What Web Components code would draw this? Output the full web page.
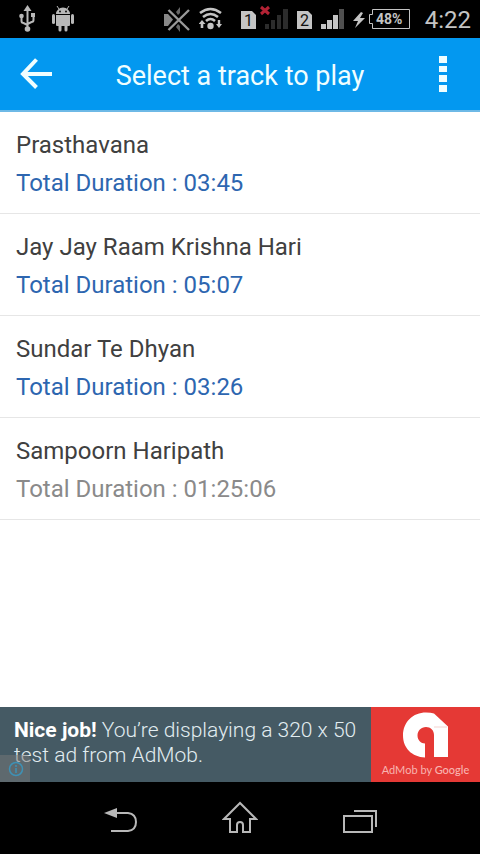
<!DOCTYPE html>
<html lang="en">
<head>
<meta charset="utf-8">
<meta name="viewport" content="width=device-width, initial-scale=1">
<title>Select a track to play</title>
<style>
html, body { margin: 0; padding: 0; }
body { background: #fff; font-family: Roboto, "Noto Sans", sans-serif; }
</style>
</head>
<body>
<track-app></track-app>

<template id="status-bar">
<style>
:host { display: flex; justify-content: space-between; align-items: center; height: 38px; background: #000; color: #c4c4c4; padding: 0 9px 0 16px; box-sizing: border-box; }
.group { display: flex; align-items: center; gap: 8px; }
.left { gap: 14px; }
svg { display: block; }
text { font: 400 16px Roboto, sans-serif; fill: #111; }
.battery text { font: 700 14px Roboto, sans-serif; fill: #c4c4c4; }
.clock { font-size: 24px; line-height: 36px; margin-left: 6px; padding-top: 2px; }
</style>
<div class="group left">
  <svg width="22" height="38" viewBox="16 0 22 38" fill="none" stroke="#b8b8b8" stroke-width="2" aria-label="USB" role="img">
    <path d="M27.500 10V29M21.500 17v4q0 2 2 2l4 2M33.500 17v3q0 2-2 2l-4 2"/>
    <g fill="#b8b8b8" stroke="none"><path d="M27.500 5l4 6h-8z"/><circle cx="27.500" cy="29" r="2.800"/><circle cx="21.500" cy="16" r="2.300"/><path d="M31 13h4v4h-4z"/></g>
  </svg>
  <svg width="22" height="38" viewBox="52 0 22 38" fill="#b8b8b8" aria-label="Debugging" role="img">
    <path d="M56 14a7 6.500 0 0 1 14 0zM56 15h14v10a1 1 0 0 1-1 1H57a1 1 0 0 1-1-1z"/>
    <path d="M58.500 25h3v5a1.500 1.500 0 0 1-3 0zM64.500 25h3v5a1.500 1.500 0 0 1-3 0z"/>
    <rect x="52" y="14" width="3" height="10" rx="1.500"/><rect x="71" y="14" width="3" height="10" rx="1.500"/>
    <path d="M59 9l-2-3M67 9l2-3" stroke="#b8b8b8"/><circle cx="60" cy="11.500" r=".9" fill="#000"/><circle cx="66" cy="11.500" r=".9" fill="#000"/>
  </svg>
</div>
<div class="group">
  <svg width="28" height="38" viewBox="163 0 28 38" aria-label="Silent" role="img">
    <path d="M164 14h4l5 5.500-5 6.500h-4z" fill="#888"/><path d="M176 12l4-5v6l-2 2zM176 27l4 5v-6l-2-2z" fill="#666"/>
    <path d="M168.500 10L189 30M189 10L168.500 30" stroke="#999" stroke-width="2.400"/>
  </svg>
  <svg width="24" height="38" viewBox="199 0 24 38" fill="none" stroke="#c4c4c4" stroke-width="2.600" aria-label="Wi-Fi" role="img">
    <path d="M200 13q10.500-8 21 0M203 17q7.500-6 15 0M206 21q4.500-4 9 0"/>
    <circle cx="210.500" cy="26" r="3.200" fill="#c4c4c4" stroke="none"/>
    <path d="M202 20l3.500 4h-2.200v4h-2.600v-4h-2.200zM219 28l3-4h-1.800v-4h-2.400v4H216z" fill="#c4c4c4" stroke="none"/>
  </svg>
  <svg width="58" height="38" viewBox="231 0 58 38" aria-label="SIM 1, no signal" role="img">
    <path d="M241 11h11l4 4v14h-15z" fill="#c4c4c4"/><text x="244" y="26">1</text>
    <path d="M265 24h4v5h-4zM271 20h4v9h-4zM277 15h4v14h-4zM283 9h5v20h-5z" fill="#2c2c2c"/>
    <path d="M261 7l8 7M269 7l-8 7" stroke="#b32234" stroke-width="3"/>
  </svg>
  <svg width="48" height="38" viewBox="297 0 48 38" aria-label="SIM 2 signal" role="img">
    <path d="M297 11h11l4 4v14h-15z" fill="#c4c4c4"/><text x="300" y="26">2</text>
    <path d="M321 24h5v5h-5zM327 20h5v9h-5zM333 15h5v14h-5z" fill="#c4c4c4"/><path d="M339 9h5v20h-5z" fill="#505050"/>
  </svg>
  <svg class="battery" width="58" height="38" viewBox="353 0 58 38" aria-label="Battery" role="img">
    <path d="M361 12l-8 9h5l-3 7 10-10h-5l3-5z" fill="#c4c4c4"/>
    <path d="M372.500 9.500h37v19h-37v-5h-3v-9h3z" fill="none" stroke="#c4c4c4"/>
    <text x="376" y="24">48%</text>
  </svg>
  <time class="clock">4:22</time>
</div>
</template>

<template id="app-bar">
<style>
:host { display: grid; grid-template-columns: 74px 1fr 74px; align-items: center; height: 74px; box-sizing: border-box; background: #0398f0; border-bottom: 2px solid #6eb9e6; color: #f0feff; }
h1 { margin: 0; font-size: 27px; line-height: 32px; font-weight: 400; text-align: center; padding-top: 4px; white-space: nowrap; }
button { border: 0; padding: 0; margin: 0; background: none; height: 72px; color: inherit; }
svg { display: block; margin: auto; }
</style>
<button type="button" aria-label="Back"><svg width="34" height="34" fill="none" stroke="currentColor" stroke-width="4"><path d="M16.500 2.500L3 17l13.500 13.500M3 17h29"/></svg></button>
<h1><slot></slot></h1>
<button type="button" aria-label="More options"><svg width="8" height="36" fill="currentColor"><path d="M0 0h8v7H0zM0 10h8v6H0zM0 19h8v7H0zM0 29h8v7H0z"/></svg></button>
</template>

<template id="track-item">
<style>
:host { display: block; border-bottom: 1px solid #e6e6e6; padding: 14px 16px 11px; color: #2d66b0; }
:host([muted]) { color: #8a8a8a; }
h2, p { margin: 0; font-weight: 400; font-size: 24px; line-height: 38px; }
h2 { color: #404040; }
</style>
<h2><slot name="title"></slot></h2>
<p>Total Duration : <slot name="time"></slot></p>
</template>

<template id="ad-banner">
<style>
:host { display: flex; height: 75px; background: #455a64; color: #e2edf1; position: relative; }
p { flex: 1; margin: 0; padding: 11px 8px 0 14px; font-size: 21px; line-height: 25px; font-weight: 300; }
b { color: #fff; font-weight: 700; }
.brand { flex: none; width: 109px; background: #e53935; text-align: center; color: #f8b4b0; }
.brand svg { display: block; margin: 5px auto 0; }
.brand small { display: block; font: 11px/14px Lato, sans-serif; margin-top: 5px; }
.brand strong { font-weight: 500; }
.info { position: absolute; left: 0; bottom: 0; width: 30px; height: 27px; border: 0; padding: 0; background: rgba(120,120,120,.5); border-top-right-radius: 4px; }
.info svg { display: block; margin: 0 0 0 8px; }
</style>
<p><b>Nice job!</b> <span>You’re displaying a 320 x 50</span> <span>test ad from AdMob.</span></p>
<div class="brand">
  <svg width="46" height="46" viewBox="403 712 46 46" role="img" aria-label="AdMob"><path d="M425 757.500C412 757 403 748 403 735.500C403 722 413 712.500 426 712.500Q431 712.500 434 713.500L448 726.500V757H434V735C434 730 430.500 727 426 727C421 727 417.500 731 417.500 735.500C417.500 740 421 743.500 425 743.500Z" fill="#fff"/><path d="M434 727h13" stroke="#f4d2d0"/></svg>
  <small>AdMob by <strong>Google</strong></small>
</div>
<button class="info" type="button" aria-label="About this ad"><svg width="16" height="16" fill="none" stroke="#3e91b5" stroke-width="1.500"><circle cx="8" cy="8" r="6.500"/><path d="M8 7v5M8 4v2"/></svg></button>
</template>

<template id="nav-bar">
<style>
:host { display: grid; grid-template-columns: repeat(3, 120px); justify-content: center; height: 72px; background: #000; color: #b8b8b8; }
button { border: 0; padding: 0; background: none; color: inherit; }
svg { display: block; margin: auto; }
</style>
<button type="button" aria-label="Back"><svg width="36" height="36" viewBox="102 801 36 36" fill="none" stroke="currentColor" stroke-width="2"><path d="M115 814h13q8 1 8 9t-8 9H111"/><path d="M104 814l13-5v10z" fill="currentColor" stroke="none"/></svg></button>
<button type="button" aria-label="Home"><svg width="36" height="36" viewBox="222 800 36 36" fill="none" stroke="currentColor" stroke-width="2"><path d="M240 803l-16 16h6v13h7v-7q0-3 3-3t3 3v7h7v-13h6z"/></svg></button>
<button type="button" aria-label="Recent apps"><svg width="36" height="36" viewBox="342 800 36 36" fill="none" stroke="currentColor" stroke-width="2"><path d="M344 816h28v16h-28zM354 811h22v16"/></svg></button>
</template>

<template id="track-app">
<style>
:host { display: flex; flex-direction: column; min-height: 100vh; background: #fff; }
main { flex: 1; }
</style>
<status-bar></status-bar>
<app-bar>Select a track to play</app-bar>
<main>
  <track-item><span slot="title">Prasthavana</span><span slot="time">03:45</span></track-item>
  <track-item><span slot="title">Jay Jay Raam Krishna Hari</span><span slot="time">05:07</span></track-item>
  <track-item><span slot="title">Sundar Te Dhyan</span><span slot="time">03:26</span></track-item>
  <track-item muted><span slot="title">Sampoorn Haripath</span><span slot="time">01:25:06</span></track-item>
</main>
<ad-banner></ad-banner>
<nav-bar></nav-bar>
</template>

<script>
class TemplateElement extends HTMLElement {
  constructor() {
    super();
    const template = document.getElementById(this.localName);
    this.attachShadow({ mode: "open" }).append(template.content.cloneNode(true));
  }
}
for (const name of ["status-bar", "app-bar", "track-item", "ad-banner", "nav-bar", "track-app"]) {
  customElements.define(name, class extends TemplateElement {});
}
</script>
</body>
</html>
